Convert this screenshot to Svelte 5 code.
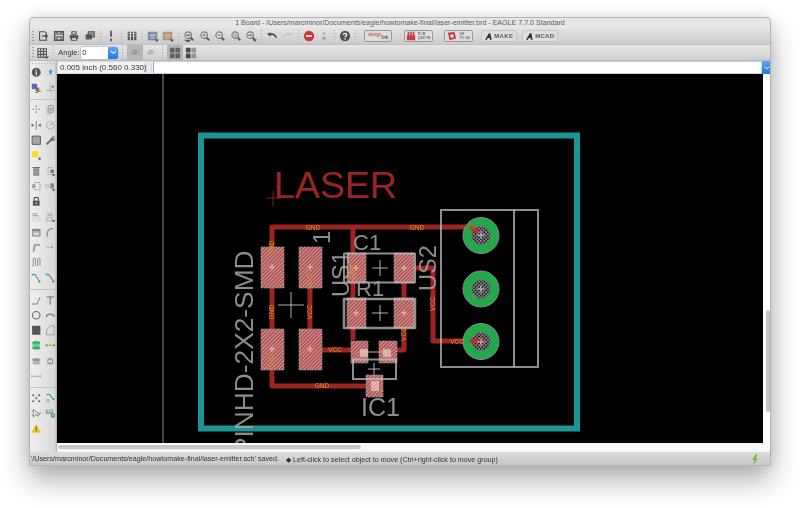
<script>
  // small toolbar icons, 14x14 viewbox
  const wrap = (inner) =>
    `<svg viewBox="0 0 14 14" width="14" height="14" fill="none" stroke="#3c3c3c" stroke-width="1.3">${inner}</svg>`;
  const zoomIcon = (inner) => wrap(`<circle cx="6" cy="6" r="3.8" stroke="#6a6a6a"/><path d="M9 9l3 3" stroke-width="2"/>${inner}`);
  const dk = 'fill="#3c3c3c" stroke="none"';

  const icons = {
    open: wrap(`<path d="M3 2h6l2 2v8H3z"/><path d="M6 7h6M10 5l2 2-2 2" stroke-width="1.6"/>`),
    save: wrap(`<path d="M2 2h10v10H2z" stroke-width="1.8"/><path d="M4.5 2v3h5V2M4.5 12V8h5v4"/>`),
    print: wrap(`<path d="M4.5 2h5v3h-5z"/><path d="M2 6h10v4H2z" ${dk}/><path d="M4 9h6v3H4z" fill="#eee"/>`),
    multi: wrap(`<path d="M5 2h7v6H5z" fill="#888"/><path d="M2 5h7v6H2z" ${dk}/>`),
    drc: wrap(`<path d="M6 1h2v7H6zM6 10h2v3H6z" ${dk}/>`),
    erc: wrap(`<path d="M2 2h2.5v10H2zM5.8 2h2.5v10H5.800zM9.600 2h2.500v10H9.600z" ${dk}/><path d="M2 4h10M2 7h10" stroke="#ddd" stroke-width=".7"/>`),
    schem: wrap(`<path d="M1 2h11v10H1z" fill="#6c7f9c" stroke="none"/><path d="M3 6h7M4 9h5" stroke="#c7d1e2"/><path d="M9 11h5l-2.5 3z" ${dk}/>`),
    brd: wrap(`<path d="M1 2h11v10H1z" fill="#b08a6a" stroke="none"/><path d="M3 6h7M4 9h5" stroke="#e0c8ac"/><path d="M9 11h5l-2.5 3z" ${dk}/>`),
    zselect: zoomIcon(`<path d="M4 6h4M3 12h5l-2.5 2z" stroke="#3c3c3c"/>`),
    zin: zoomIcon(`<path d="M4.3 6h3.4M6 4.3v3.4" stroke="#777"/>`),
    zout: zoomIcon(`<path d="M4.3 6h3.4" stroke="#777"/>`),
    zfit: zoomIcon(`<path d="M4.5 4.5h3v3h-3z" stroke="#777" stroke-width=".8"/>`),
    zdrop: zoomIcon(`<path d="M4 6h4"/><path d="M9 11h5l-2.5 3z" ${dk}/>`),
    undo: wrap(`<path d="M3 6c3-2 7-2 9 3" stroke-width="2"/><path d="M1 4l5-1-1 5z" ${dk}/>`),
    redo: wrap(`<path d="M11 6C8 4 4 4 2 9" stroke="#c4c4c4" stroke-width="2"/><path d="M13 4l-5-1 1 5z" fill="#c4c4c4" stroke="none"/>`),
    stop: wrap(`<circle cx="7" cy="7" r="6" fill="#d8111f" stroke="none"/><path d="M3.5 6h7v2h-7z" fill="#fff" stroke="none"/>`),
    go: wrap(`<circle cx="7" cy="4" r="1.600" fill="#a8a8a8" stroke="none"/><circle cx="7" cy="9.5" r="2" fill="#999" stroke="none"/>`),
    help: wrap(`<circle cx="7" cy="7" r="6" ${dk}/><path d="M5 5.5c0-2.200 4-2.200 4 0 0 1.500-2 1.500-2 3" stroke="#fff" stroke-width="1.5"/><path d="M6.200 9.600h1.600v1.500H6.200z" fill="#fff" stroke="none"/>`),
    grid: wrap(`<path d="M1 2h10v10H1zM4.300 2v10M7.600 2v10M1 5.300h10M1 8.600h10" stroke-width="1.200"/><path d="M9 11h5l-2.5 3z" ${dk}/>`),
    tabA: wrap(`<path d="M3 6h8M3 8h6M5 4h4" stroke="#8c8c8c"/>`),
    tabB: wrap(`<path d="M3 6h8M3 8h6M5 4h4" stroke="#a2a2a2"/>`),
    quadA: wrap(`<path d="M1 1h5.500v5.500H1zM7.500 1H13v5.500H7.500zM1 7.500h5.500V13H1zM7.500 7.500H13V13H7.500z" fill="#555" stroke="none"/>`),
    quadB: wrap(`<path d="M1 1h5.500v5.500H1zM1 7.500h5.500V13H1z" fill="#333" stroke="none"/><path d="M7.500 1H13v5.500H7.500zM7.500 7.500H13V13H7.500z" fill="#8a8a8a" stroke="none"/>`),

    info: wrap(`<circle cx="7" cy="7" r="6" ${dk}/><path d="M6.200 3h1.600v1.600H6.200zM6.200 5.600h1.600V11H6.200z" fill="#eee" stroke="none"/>`),
    eye: wrap(`<path d="M1 7c3-4 9-4 12 0-3 4-9 4-12 0z" fill="#f4f4f4" stroke="#999" stroke-width=".7"/><circle cx="7.500" cy="6.500" r="2.500" fill="#2f86dc" stroke="none"/>`),
    layers: wrap(`<path d="M1 1h7v7H1z" fill="#2d55b8" stroke="none"/><path d="M6 6h5v5H6z" fill="#c8283c" stroke="none"/><path d="M8 10h5v2H8z" fill="#1fa84a" stroke="none"/><path d="M6 13h3" stroke="#222"/>`),
    mark: wrap(`<path d="M7 1v12M1 10h12" stroke="#8a8a8a" stroke-width=".8"/><path d="M9 5h3M10.500 3.500v3" stroke="#555"/>`),
    move: wrap(`<path d="M7 2v2M7 10v2M2 7h2M10 7h2" stroke="#666" stroke-width="1.600"/><circle cx="7" cy="7" r=".9" fill="#666" stroke="none"/>`),
    copy: wrap(`<path d="M5 2h6v9H5z" stroke="#888"/><path d="M3 4v9h6" stroke="#aaa"/><circle cx="8" cy="7" r="1.500" stroke="#888"/>`),
    mirror: wrap(`<path d="M7 1v12" stroke="#777"/><path d="M1 5l3 2-3 2zM13 5l-3 2 3 2z" fill="#555" stroke="#555" stroke-width=".6"/>`),
    rotate: wrap(`<circle cx="7" cy="7" r="5" stroke="#aaa"/><path d="M7 7l3-3" stroke="#666"/>`),
    square: wrap(`<path d="M1.500 1.500h11v11h-11z" fill="#9a9a9a" stroke="#444" stroke-width="1.300"/>`),
    wrench: wrap(`<path d="M2 12.500L8.500 6" stroke="#555" stroke-width="2.400"/><path d="M8 7c-1-3 2-6 5-5l-2.500 2.500 1 1L13.500 3c1 3-2.500 6-5.500 4z" fill="#555" stroke="none"/>`),
    yellow: wrap(`<circle cx="5.500" cy="5.500" r="4.500" fill="#f6e000" stroke="none"/><circle cx="11.500" cy="11.500" r="1.600" ${dk}/>`),
    trash: wrap(`<path d="M3 3h8v10H3z" fill="#777" stroke="none"/><path d="M2 2h10" stroke="#555"/><path d="M5 5v6M7 5v6M9 5v6" stroke="#bbb" stroke-width=".7"/>`),
    add: wrap(`<path d="M4 2h6v9H4z" stroke="#888" stroke-dasharray="1.500 1"/><path d="M7 5h5v4H7z" fill="#666" stroke="none"/><path d="M9 11h5l-2.5 3z" ${dk}/>`),
    pinswap: wrap(`<path d="M5 2h7v10H5z" stroke="#888" stroke-dasharray="2 1"/><path d="M1 7h5M2 5h2M2 9h2" stroke="#555"/>`),
    gateswap: wrap(`<path d="M1 5h4v4H1z" stroke="#999" stroke-width=".8"/><path d="M7 3h5v7H7z" fill="#777" stroke="none"/><path d="M9 11h5l-2.5 3z" ${dk}/>`),
    lock: wrap(`<path d="M4 6V4c0-3 6-3 6 0v2" stroke-width="1.500"/><path d="M2.500 6h9v7h-9z" ${dk}/><circle cx="7" cy="9.500" r="1" fill="#ddd" stroke="none"/>`),
    name: wrap(`<path d="M2 2.500h6M2 5h8" stroke="#888"/><path d="M2 8h10v4H2z" stroke="#bbb" stroke-width=".8"/>`),
    value: wrap(`<path d="M3 2.500h6M3 5h8" stroke="#999"/><path d="M2 8h8v4H2z" stroke="#888" stroke-width=".8"/><path d="M9 11h5l-2.5 3z" ${dk}/>`),
    smash: wrap(`<path d="M2 3h10v9H2z" stroke="#777"/><path d="M2 3h10v3H2z" fill="#777" stroke="none"/><path d="M4 7h7v4H4z" fill="#ddd" stroke="#777" stroke-width=".7"/>`),
    miter: wrap(`<path d="M3 13V8c0-3 3-6 8-6" stroke="#888" stroke-width="2"/>`),
    split: wrap(`<path d="M2 13L4 3h8v2H6l-1.500 8z" fill="#888" stroke="none"/>`),
    pad: wrap(`<path d="M2 7h4" stroke="#999"/><circle cx="9" cy="7" r="1.300" fill="#777" stroke="none"/><path d="M9 2v2" stroke="#bbb"/>`),
    meander: wrap(`<path d="M1 12h2V3c0-2 3-2 3 0v7c0 2 3 2 3 0V3c0-2 3-2 3 0v9" stroke="#666" stroke-width="1.100"/>`),
    route: wrap(`<path d="M2 2h3l5 7" stroke="#1f6fc4" stroke-width="1.500"/><circle cx="11" cy="11" r="1.600" fill="#1fa84a" stroke="none"/><circle cx="2" cy="2" r="1.300" fill="#1fa84a" stroke="none"/>`),
    ripup: wrap(`<path d="M2 2h3l2 3" stroke="#1f6fc4" stroke-width="1.500"/><path d="M7 5l3 4" stroke="#d62c3c" stroke-width="1.500"/><circle cx="11" cy="11" r="1.600" fill="#1fa84a" stroke="none"/><circle cx="2" cy="2" r="1.300" fill="#1fa84a" stroke="none"/>`),
    line: wrap(`<path d="M1 12h7l4-9" stroke="#666" stroke-width="1.300"/>`),
    tee: wrap(`<path d="M2 2.500h10M7 2.500V13" stroke="#777" stroke-width="1.800"/>`),
    circle: wrap(`<circle cx="7" cy="7" r="5" stroke="#555" stroke-width="1.500"/>`),
    arc: wrap(`<path d="M1.500 9c2-5 9-5 11 0" stroke="#555" stroke-width="1.500"/>`),
    fill: wrap(`<path d="M1.500 1h11v12h-11z" fill="#3c3c3c" stroke="none"/>`),
    poly: wrap(`<path d="M2 13V7l5-6h5v12z" stroke="#999"/>`),
    via: wrap(`<ellipse cx="7" cy="3.500" rx="5.500" ry="2.200" fill="#1fa84a" stroke="none"/><ellipse cx="7" cy="7" rx="5.500" ry="2.200" fill="#5c9" stroke="none"/><ellipse cx="7" cy="10.500" rx="5.500" ry="2.200" fill="#1fa84a" stroke="none"/>`),
    signal: wrap(`<path d="M2 7h10" stroke="#d8c800" stroke-width="1.500"/><circle cx="2" cy="7" r="1.500" fill="#1fa84a" stroke="none"/><circle cx="12" cy="7" r="1.500" fill="#1fa84a" stroke="none"/><circle cx="7" cy="7" r="1" fill="#1fa84a" stroke="none"/>`),
    stack: wrap(`<ellipse cx="7" cy="5" rx="5.500" ry="2.400" fill="#888" stroke="none"/><ellipse cx="7" cy="9" rx="5.500" ry="2.400" fill="#aaa" stroke="none"/>`),
    hole: wrap(`<path d="M7 1v12M2 4h10M2 10h10" stroke="#999" stroke-width=".8"/><circle cx="7" cy="7" r="3.500" stroke="#777"/>`),
    dims: wrap(`<path d="M1 7h12M1 5v4M13 5v4M5 6v2M9 6v2" stroke="#999" stroke-width="1"/>`),
    ratsnest: wrap(`<circle cx="3" cy="3" r="1.300" ${dk}/><circle cx="11" cy="3" r="1.300" ${dk}/><circle cx="3" cy="11" r="1.300" ${dk}/><circle cx="11" cy="11" r="1.300" ${dk}/><circle cx="7" cy="7" r="1.300" ${dk}/><path d="M3 3l8 8M11 3l-8 8" stroke="#aaa" stroke-width=".6"/>`),
    autoroute: wrap(`<path d="M2 2h4l4 5" stroke="#1f6fc4" stroke-width="1.500"/><circle cx="11" cy="8" r="1.500" fill="#1fa84a" stroke="none"/><path d="M2 13l2-5 2 5" stroke="#777" stroke-width=".9"/>`),
    ulp: wrap(`<path d="M3 2v10l7-5z" stroke="#777"/><path d="M1 4h2M1 10h2M10 7h3" stroke="#888"/><path d="M8 9l1.500 2L13 6" stroke="#1fa84a"/>`),
    panel: wrap(`<path d="M1 2h10v6H1z" fill="#999" stroke="none"/><path d="M3 4h6" stroke="#eee"/><circle cx="10.500" cy="10" r="3" fill="#1fa84a" stroke="none"/><circle cx="10.500" cy="10" r="1" fill="#eee" stroke="none"/>`),
    warn: wrap(`<path d="M7 1l6.500 12H.5z" fill="#f2c200" stroke="none"/><path d="M6.300 5h1.400v4.500H6.300zM6.300 10.300h1.400v1.400H6.300z" fill="#444" stroke="none"/>`)
  };

  const autodesk = `<svg viewBox="0 0 10 10" width="9" height="9"><path d="M0 9.500L5.500.5h2.300L9.500 9.500H7L6.600 7H4L2.600 9.500z" fill="#333"/></svg>`;

  // top toolbar, "|" is a dotted separator
  const topBar = ["open", "save", "print", "multi", "|", "drc", "|", "erc", "|", "schem", "brd", "|",
    "zselect", "zin", "zout", "zfit", "zdrop", "|", "undo", "redo", "|", "stop", "go", "|", "help"];

  const sideGroups = [
    [["info", "eye"], ["layers", "mark"]],
    [["move", "copy"], ["mirror", "rotate"], ["square", "wrench"], ["yellow", null], ["trash", "add"],
     ["pinswap", "gateswap"], ["lock", null], ["name", "value"], ["smash", "miter"], ["split", "pad"],
     ["meander", null], ["route", "ripup"]],
    [["line", "tee"], ["circle", "arc"], ["fill", "poly"], ["via", "signal"], ["stack", "hole"], ["dims", null]],
    [["ratsnest", "autoroute"], ["ulp", "panel"], ["warn", null]]
  ];

  // board drawing, in screen coordinates of the shot
  const traces = [
    "M272 288V227H466",
    "M272 370V386H375",
    "M310 288V329",
    "M272 329V288",
    "M322 350H360",
    "M353 227V340",
    "M404 283V350H388",
    "M414 268H433V341H470"
  ];
  const pads = [
    [261, 247, 23, 41], [299, 247, 23, 41], [261, 329, 23, 41], [299, 329, 23, 41],
    [347, 253, 19, 30], [394, 253, 20, 30], [347, 298, 19, 30], [394, 298, 20, 30],
    [351, 341, 17, 22], [379, 341, 18, 22], [366, 375, 17, 22]
  ];
  const crosses = [
    [291, 305, 13], [380, 268, 8], [380, 313, 8], [374, 369, 6],
    [272, 267, 3], [310, 267, 3], [272, 349, 3], [310, 349, 3], [356, 268, 3], [404, 268, 3],
    [356, 313, 3], [404, 313, 3], [481, 235, 4], [481, 289, 4], [481, 342, 4]
  ];
  const drills = [235.5, 289, 341.5];
  const netLabels = [
    { t: "GND", x: 313, y: 230 }, { t: "GND", x: 417, y: 230 }, { t: "GND", x: 322, y: 388 },
    { t: "VCC", x: 335, y: 352 }, { t: "VCC", x: 457, y: 344 },
    { t: "GND", x: 274, y: 248, r: 1 }, { t: "VCC", x: 312, y: 312, r: 1 }, { t: "GND", x: 274, y: 312, r: 1 },
    { t: "GND", x: 274, y: 362, r: 1 }, { t: "VCC", x: 312, y: 282, r: 1 }, { t: "GND", x: 355, y: 272, r: 1 },
    { t: "VCC", x: 406, y: 334, r: 1 }, { t: "VCC", x: 435, y: 304, r: 1 }
  ];
</script>

<div class="window">
  <div class="title">1 Board - /Users/marcminor/Documents/eagle/howtomake-final/laser-emitter.brd - EAGLE 7.7.0 Standard</div>

  <div class="bar top">
    <span class="grip"></span>
    {#each topBar as b}
      {#if b === "|"}
        <span class="sep"></span>
      {:else}
        <span class="btn">{@html icons[b]}</span>
      {/if}
    {/each}
    <span class="sep"></span>
    <span class="wide link"><em>design</em><b>link</b></span>
    <span class="wide pcb"><svg viewBox="0 0 12 12" width="10" height="10"><path d="M1 5h10v6H1zM2 1h2v4H2zM5 1h2v4H5zM8 1h2v4H8z" fill="#c8404c"/></svg><i>PCB<br />QUOTE</i></span>
    <span class="wide pcb"><svg viewBox="0 0 12 12" width="10" height="10"><path d="M1 2l8-1 2 8-8 2z" fill="#c8404c"/><circle cx="6" cy="6" r="2" fill="#eee"/></svg><i>DF<br />TO 3D</i></span>
    <span class="wide mk first">{@html autodesk}MAKE</span>
    <span class="wide mk">{@html autodesk}MCAD</span>
  </div>

  <div class="bar second">
    <span class="grip"></span>
    <span class="btn">{@html icons.grid}</span>
    <span class="sep"></span>
    <label class="angle" for="angle">Angle:</label>
    <span class="select"><input id="angle" value="0" readonly /><span class="drop"><svg viewBox="0 0 8 5" width="7" height="5"><path d="M1 1l3 2.500L7 1" fill="none" stroke="#fff" stroke-width="1.300"/></svg></span></span>
    <span class="sep wider"></span>
    <span class="btn on">{@html icons.tabA}</span>
    <span class="btn">{@html icons.tabB}</span>
    <span class="sep wider"></span>
    <span class="btn on">{@html icons.quadA}</span>
    <span class="btn">{@html icons.quadB}</span>
  </div>

  <div class="body">
    <div class="side">
      <div class="vgrip"></div>
      {#each sideGroups as group, g}
        {#if g > 0}<div class="rule"></div>{/if}
        {#each group as row}
          <div class="siderow">
            {#each row as name}
              <span class="sidebtn">{#if name}{@html icons[name]}{/if}</span>
            {/each}
          </div>
        {/each}
      {/each}
    </div>

    <div class="main">
      <div class="cmd">
        <span class="coords">0.005 inch (0.560 0.330)</span>
        <span class="smallbox"></span>
        <span class="cmdinput"></span>
        <span class="cmddrop"><svg viewBox="0 0 8 5" width="6" height="4"><path d="M1 1l3 2.500L7 1" fill="none" stroke="#fff" stroke-width="1.300"/></svg></span>
      </div>

      <div class="viewport">
        <svg class="board" viewBox="57 74 706 369" width="706" height="369">
          <defs>
            <pattern id="hatch" width="2.600" height="2.600" patternUnits="userSpaceOnUse" patternTransform="rotate(-45)">
              <rect width="2.600" height="2.600" fill="#a84a4a" />
              <rect width="2.600" height="1.100" fill="#d99a9a" />
            </pattern>
            <pattern id="drillfill" width="2.500" height="2.500" patternUnits="userSpaceOnUse" patternTransform="rotate(45)">
              <rect width="2.500" height="2.500" fill="#151515" />
              <rect width="2.500" height=".8" fill="#8e8e8e" />
              <rect width=".8" height="2.500" fill="#8e8e8e" />
            </pattern>
          </defs>

          <path d="M163 74V443" stroke="#8a8a8a" fill="none" />

          <rect x="201" y="135.500" width="376" height="293" fill="none" stroke="#1a9696" stroke-width="6" />

          <g fill="none" stroke="#9e2323" stroke-width="5" stroke-linejoin="round">
            {#each traces as d}<path {d} />{/each}
          </g>

          {#each drills as cy}
            <circle cx="481" {cy} r="18" fill="#21a94a" stroke="#8a8a8a" stroke-width="1" />
            <circle cx="481" {cy} r="9.500" fill="url(#drillfill)" stroke="#777" stroke-width=".8" />
          {/each}
          <path d="M470 227L478 232M470 341H484" stroke="#b83030" stroke-width="4" />
          <path d="M466 227H476" stroke="#8a7a30" stroke-width="5" opacity=".5" />

          {#each pads as [x, y, w, h]}
            <rect {x} {y} width={w} height={h} fill="url(#hatch)" stroke="#8c8c8c" stroke-width="1" stroke-dasharray="1.500 1" />
          {/each}
          <path d="M359 352H388" stroke="#cfc23a" stroke-width="1" />
          <rect x="360" y="349" width="8" height="8" fill="#e9c9c9" opacity=".7" />
          <rect x="383" y="349" width="8" height="8" fill="#e9c9c9" opacity=".7" />
          <rect x="371" y="381" width="8" height="10" fill="#e9c9c9" opacity=".7" />

          <g fill="none" stroke="#bcbcbc" stroke-opacity=".75">
            <path d="M344 253.500H415M344 282.500H415M344 253V283M415 253V283" stroke-width="2" />
            <path d="M344 299H415M344 328H415M344 298V329M415 298V329" stroke-width="2.500" />
            <rect x="353" y="359.500" width="43" height="19.500" stroke-width="2" />
            <rect x="441" y="210" width="97" height="157" stroke-width="2" />
            <path d="M514 210V367" stroke-width="2" />
          </g>

          <g stroke="#dcdcdc" stroke-width=".8">
            {#each crosses as [x, y, r]}
              <path d="M{x - r} {y}H{x + r}M{x} {y - r}V{y + r}" />
            {/each}
          </g>
          <path d="M266 198H281M273 191V206" stroke="#7c1c1c" stroke-width="1" />

          <text class="cu" x="274" y="198">LASER</text>
          <g class="silk">
            <text class="sm" x="353" y="250">C1</text>
            <text class="sm" x="356" y="296">R1</text>
            <text x="361" y="416">IC1</text>
            <text transform="translate(253 455) rotate(-90)" class="lg">PINHD-2X2-SMD</text>
            <text class="mid" transform="translate(349 297) rotate(-90)">US1</text>
            <text class="mid" transform="translate(436 291) rotate(-90)">US2</text>
            <text class="mid" transform="translate(330 244) rotate(-90)">1</text>
          </g>
          <g class="net">
            {#each netLabels as n}
              <text x={n.x} y={n.y} transform={n.r ? `rotate(-90 ${n.x} ${n.y})` : undefined} text-anchor="middle">{n.t}</text>
            {/each}
          </g>
        </svg>
        <div class="vscroll"><span class="vthumb"></span></div>
      </div>

      <div class="hscroll"><span class="hthumb"></span></div>
    </div>
  </div>

  <div class="status">
    <span>'/Users/marcminor/Documents/eagle/howtomake-final/laser-emitter.sch' saved.</span>
    <span class="hint">◆ Left-click to select object to move (Ctrl+right-click to move group)</span>
    <svg class="bolt" viewBox="0 0 8 11" width="8" height="11"><path d="M5 0L1 6h2.500L2 11l5-6.500H4.500L6.500 1z" fill="#6fbb2e" /></svg>
  </div>
</div>

<style>
  :global(body) {
    margin: 0;
    background: #fff;
  }
  :global(#app) {
    padding: 17px 29px 42px;
    width: 742px;
    height: 449px;
  }

  .window {
    width: 742px;
    height: 449px;
    box-sizing: border-box;
    display: flex;
    flex-direction: column;
    border-radius: 4px 4px 2px 2px;
    outline: 1px solid #b4b4b4;
    outline-offset: -1px;
    background: #f1f1f1;
    box-shadow: 0 14px 28px rgba(0, 0, 0, 0.32), 0 0 14px rgba(0, 0, 0, 0.1);
    font-family: "Liberation Sans", sans-serif;
    color: #333;
    overflow: hidden;
    filter: blur(0.35px);
  }

  .title {
    height: 10px;
    padding-top: 1px;
    flex: none;
    text-align: center;
    font-size: 7.1px;
    line-height: 10px;
    color: #5e5e5e;
    background: #e6e6e6;
  }

  .bar {
    display: flex;
    align-items: center;
    flex: none;
    padding-left: 3px;
    border-bottom: 1px solid #bdbdbd;
    box-sizing: border-box;
  }
  .top {
    height: 17px;
    background: linear-gradient(#e4e4e4, #cbcbcb);
    border-bottom-color: #c0c0c0;
  }
  .second {
    height: 16px;
    background: linear-gradient(#e6e6e6, #cecece);
    border-bottom-color: #b8b8b8;
  }

  .grip {
    width: 2px;
    height: 11px;
    margin-right: 1.25px;
    background: repeating-linear-gradient(#9c9c9c 0 1px, transparent 1px 3px);
    flex: none;
  }
  .btn {
    width: 15.5px;
    height: 15px;
    flex: none;
    display: flex;
    align-items: center;
    justify-content: center;
  }
  .btn :global(svg) {
    width: 12px;
    height: 12px;
    opacity: 0.85;
  }
  .btn.on {
    background: #b6b6b6;
  }
  .sep {
    width: 5.5px;
    height: 13px;
    flex: none;
    background: repeating-linear-gradient(#aaa 0 1px, transparent 1px 3px) center / 1px 100% no-repeat;
  }
  .sep.wider {
    width: 9px;
  }

  .wide {
    height: 12px;
    flex: none;
    display: flex;
    align-items: center;
    justify-content: center;
    gap: 2px;
    box-sizing: border-box;
    border: 1px solid #9a9a9a;
    border-radius: 2px;
    background: #dedede;
    font-size: 3.6px;
    line-height: 4px;
  }
  .link {
    width: 28px;
    margin-left: 6px;
    gap: 0;
    font-size: 4.5px;
  }
  .link em {
    font-style: normal;
    color: #c8303c;
    margin-top: -3px;
  }
  .link b {
    font-weight: normal;
    margin-top: 3px;
  }
  .pcb {
    width: 29px;
    margin-left: 11.5px;
  }
  .pcb i {
    font-style: normal;
  }
  .mk {
    width: 36px;
    margin-left: 5px;
    border-color: #c6c6c6;
    font-size: 6px;
    font-weight: 700;
    letter-spacing: 0.3px;
    color: #555;
  }
  .mk.first {
    margin-left: 8px;
  }
  .mk :global(svg) {
    width: 7px;
    height: 7px;
  }

  .angle {
    font-size: 7.5px;
    margin-left: 2px;
    width: 23px;
    flex: none;
  }
  .select {
    display: flex;
    width: 37px;
    height: 12px;
    flex: none;
    border-radius: 2px;
    overflow: hidden;
    box-shadow: 0 0 0 0.5px #b0b0b0;
  }
  .select input {
    width: 27px;
    height: 12px;
    box-sizing: border-box;
    border: 0;
    padding: 0 1px;
    font: 7.5px "Liberation Sans", sans-serif;
    background: #fff;
    color: #333;
  }
  .drop {
    width: 10px;
    background: linear-gradient(#5aa5f7, #2277ea);
    display: flex;
    align-items: center;
    justify-content: center;
  }

  .body {
    flex: 1;
    display: flex;
    min-height: 0;
  }

  .side {
    width: 28px;
    flex: none;
    box-sizing: border-box;
    background: linear-gradient(90deg, #f0f0f0, #dadada 92%, #a8a8a8);
    padding-top: 1px;
  }
  .vgrip {
    height: 3px;
    margin: 0 3px;
    background: repeating-linear-gradient(90deg, #aaa 0 1px, transparent 1px 3px) center / 100% 1px no-repeat;
  }
  .rule {
    height: 1px;
    margin: 3px 1px 2.5px;
    background: #c2c2c2;
  }
  .siderow {
    height: 15.3px;
    display: flex;
    padding-left: 0.5px;
  }
  .sidebtn {
    width: 13.5px;
    display: flex;
    align-items: center;
    justify-content: center;
  }
  .sidebtn :global(svg) {
    width: 10.5px;
    height: 10.5px;
    opacity: 0.85;
  }

  .main {
    flex: 1;
    display: flex;
    flex-direction: column;
    min-width: 0;
  }

  .cmd {
    height: 13px;
    display: flex;
    flex: none;
  }
  .coords {
    width: 88px;
    flex: none;
    box-sizing: border-box;
    font-size: 8px;
    line-height: 12px;
    padding-left: 2px;
    background: #f3f3f3;
    border: 1px solid #ddd;
    color: #333;
    white-space: nowrap;
  }
  .smallbox {
    width: 6px;
    margin-left: 1px;
    flex: none;
    background: #ececec;
    border: 1px solid #d5d5d5;
    box-sizing: border-box;
  }
  .cmdinput {
    flex: 1;
    margin-left: 1px;
    background: #fff;
    border: 1px solid #b9d4f6;
    border-left: 1px solid #7aa9e4;
  }
  .cmddrop {
    width: 9px;
    flex: none;
    background: linear-gradient(#5aa5f7, #2277ea);
    display: flex;
    align-items: center;
    justify-content: center;
  }

  .viewport {
    height: 369px;
    display: flex;
    flex: none;
  }
  .board {
    display: block;
    flex: none;
    background: #000;
  }
  .vscroll {
    flex: 1;
    background: #fff;
    padding-left: 3px;
    box-sizing: border-box;
  }
  .vthumb {
    display: block;
    width: 4px;
    height: 102px;
    margin-top: 236px;
    background: #c6c6c6;
    border-radius: 2px;
  }
  .hscroll {
    height: 9px;
    flex: none;
    background: #f7f7f7;
    padding-top: 2px;
    box-sizing: border-box;
  }
  .hthumb {
    display: block;
    width: 303px;
    height: 4px;
    margin-left: 1px;
    background: #c6c6c6;
    border-radius: 2px;
  }

  .status {
    height: 14px;
    flex: none;
    display: flex;
    align-items: center;
    padding: 0 12px 0 2px;
    font-size: 7.15px;
    background: linear-gradient(#dcdcdc, #c6c6c6);
    color: #333;
    white-space: nowrap;
  }
  .hint {
    margin-left: 7px;
  }
  .bolt {
    margin-left: auto;
  }

  .board text {
    font-family: "Liberation Sans", sans-serif;
  }
  .cu {
    font-size: 37.6px;
    fill: #9e2323;
  }
  .silk text {
    font-size: 25px;
    fill: #a6a6a6;
    fill-opacity: 0.85;
  }
  .silk .sm {
    font-size: 22px;
  }
  .silk .mid {
    font-size: 23.5px;
  }
  .silk .lg {
    font-size: 26.3px;
  }
  .net text {
    font-size: 6.5px;
    fill: #d09a2a;
  }
</style>
